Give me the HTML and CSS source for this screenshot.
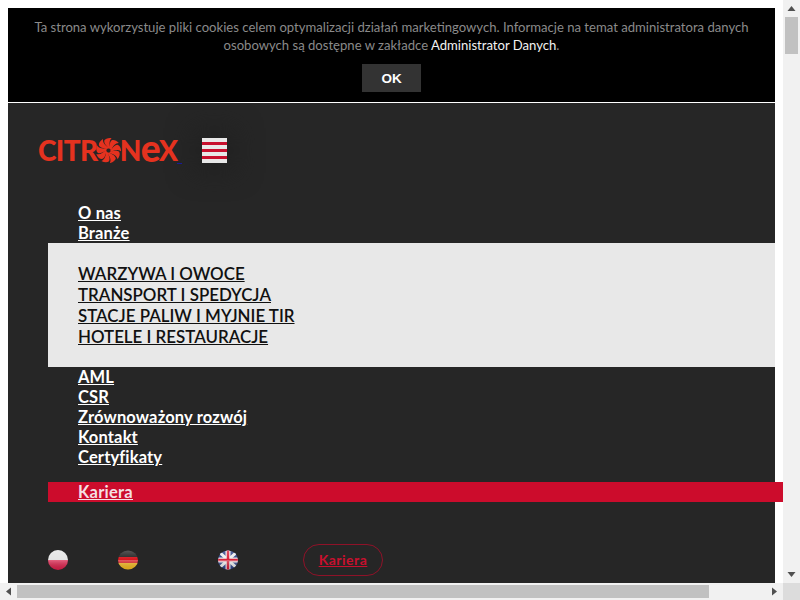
FILE: index.html
```html
<!DOCTYPE html>
<html lang="pl">
<head>
<meta charset="utf-8">
<title>Citronex</title>
<link rel="stylesheet" href="styles.css">
</head>
<body>
<div class="viewport">
<section class="cookie">
  <p class="cookie-text">Ta strona wykorzystuje pliki cookies celem optymalizacji działań marketingowych. Informacje na temat administratora danych osobowych są dostępne w zakładce <a href="#">Administrator Danych</a>.</p>
  <button class="cookie-ok">OK</button>
</section>
<main class="panel">
  <header class="top">
    <a class="logo" href="#"><span>CITR</span><svg class="swirl" viewBox="-12 -12 24 24" width="25" height="25"><g fill="#e5321f"><path id="b" d="M0-1.800C-1-4-4.500-6-4-9.500C-3-11.500 0-12.300 3-11.800C.5-9.500 .5-6 2-2Z"/><use href="#b" transform="rotate(40)"/><use href="#b" transform="rotate(80)"/><use href="#b" transform="rotate(120)"/><use href="#b" transform="rotate(160)"/><use href="#b" transform="rotate(200)"/><use href="#b" transform="rotate(240)"/><use href="#b" transform="rotate(280)"/><use href="#b" transform="rotate(320)"/></g></svg><span>N</span><span class="logo-e">e</span><span>X</span></a>
    <button class="burger" aria-label="Menu"><i></i><i></i><i></i></button>
  </header>
  <nav class="nav">
    <ul class="menu">
      <li><a href="#">O nas</a></li>
      <li><a href="#">Branże</a></li>
    </ul>
    <ul class="sub">
      <li><a href="#">WARZYWA I OWOCE</a></li>
      <li><a href="#">TRANSPORT I SPEDYCJA</a></li>
      <li><a href="#">STACJE PALIW I MYJNIE TIR</a></li>
      <li><a href="#">HOTELE I RESTAURACJE</a></li>
    </ul>
    <ul class="menu">
      <li><a href="#">AML</a></li>
      <li><a href="#">CSR</a></li>
      <li><a href="#">Zrównoważony rozwój</a></li>
      <li><a href="#">Kontakt</a></li>
      <li><a href="#">Certyfikaty</a></li>
    </ul>
    <div class="active"><a href="#">Kariera</a></div>
  </nav>
  <footer class="langs">
    <svg class="flag pl" viewBox="0 0 20 20"><defs><clipPath id="c"><circle cx="10" cy="10" r="10"/></clipPath><clipPath id="o"><ellipse cx="10" cy="10" rx="10" ry="9.500"/></clipPath><linearGradient id="g" x1="0" y1="0" x2="0" y2="1"><stop offset="0" stop-color="#fff" stop-opacity=".25"/><stop offset=".5" stop-color="#fff" stop-opacity="0"/><stop offset=".5" stop-color="#fff" stop-opacity=".3"/><stop offset="1" stop-color="#000" stop-opacity=".1"/></linearGradient></defs><g clip-path="url(#c)"><rect width="20" height="10" fill="#e4e4e4"/><rect y="10" width="20" height="10" fill="#dc1f4a"/><rect width="20" height="20" fill="url(#g)"/></g></svg>
    <svg class="flag de" viewBox="0 0 20 20"><g clip-path="url(#o)"><rect width="20" height="7" fill="#222"/><rect y="7" width="20" height="6" fill="#d8141c"/><rect y="13" width="20" height="7" fill="#f2b91e"/><rect width="20" height="20" fill="url(#g)"/></g></svg>
    <svg class="flag en" viewBox="0 0 20 20"><g clip-path="url(#o)"><rect width="20" height="20" fill="#2a3f85"/><path d="M0 1L20 19M20 1L0 19" stroke="#eee" stroke-width="3"/><path d="M10 0V20M0 10H20" stroke="#eee" stroke-width="5"/><path d="M10 0V20M0 10H20" stroke="#d81e36" stroke-width="2.500"/><rect width="20" height="20" fill="url(#g)"/></g></svg>
    <a class="career" href="#">Kariera</a>
  </footer>
</main>
</div>
<div class="vbar">
  <svg class="arrow" viewBox="0 0 17 17"><path d="M8.500 6L12.500 11H4.500Z"/></svg>
  <div class="vtrack"><div class="vthumb"></div></div>
  <svg class="arrow" viewBox="0 0 17 17"><path d="M8.500 11L12.500 6H4.500Z"/></svg>
</div>
<div class="hbar">
  <svg class="arrow" viewBox="0 0 17 17"><path d="M6 8.500L11 4.500V12.500Z"/></svg>
  <div class="htrack"><div class="hthumb"></div></div>
  <svg class="arrow" viewBox="0 0 17 17"><path d="M11 8.500L6 4.500V12.500Z"/></svg>
</div>
<div class="corner"></div>
</body>
</html>
```

FILE: styles.css
```css
html, body { height: 100%; overflow: hidden; }
body { margin: 0; display: grid; grid-template-columns: 783px 17px; grid-template-rows: 583px 17px; background: #fff; font-family: "Lato", "Open Sans", sans-serif; }
.viewport { padding: 8px 8px 0; overflow: hidden; }
.vbar, .hbar { display: flex; background: #f1f1f1; }
.vbar { flex-direction: column; }
.arrow { width: 17px; height: 17px; flex: none; fill: #505050; }
.vtrack { flex: 1; padding: 0 2px; }
.vthumb { height: 37px; background: #c1c1c1; }
.htrack { flex: 1; padding: 2px 0; }
.hthumb { width: 692px; height: 13px; background: #c1c1c1; }
.corner { background: #dcdcdc; }
.cookie { background: #000; height: 94px; border-bottom: 1px solid #fff; text-align: center; display: flex; flex-direction: column; align-items: center; }
.cookie-text { margin: 10px 20px 0; font-size: 13.100px; line-height: 18px; color: #8a8a8a; }
.cookie-text a { color: #f2f2f2; text-decoration: none; }
.cookie-ok { margin-top: 10px; width: 59px; height: 28px; border: 0; background: #333; color: #fff; font: bold 13.500px "Liberation Sans", sans-serif; }
.panel { background: #262626; padding-top: 35px; height: 480px; }
.top { display: flex; align-items: center; padding-left: 30px; height: 25px; }
.logo { display: flex; align-items: center; color: #e5321f; text-decoration: none; font: 900 28px/25px "Lato", sans-serif; letter-spacing: -.6px; width: 164px; position: relative; }
.logo::after { content: ""; position: absolute; left: 139px; top: 25px; width: 5px; height: 1px; background: #1a1a9a; }
.logo-e { font-size: 37px; line-height: 25px; margin: -6px -1px 0 0; }
.swirl { flex: none; margin: 0 -1px 0 -2px; }
.burger { width: 25px; height: 25px; padding: 4px 0; border: 0; background: #e8e8e8; display: flex; flex-direction: column; justify-content: space-between; box-shadow: 0 0 25px 10px #222; }
.burger i { display: block; height: 3px; background: #c8102e; }
.nav { margin-top: 40px; }
.menu, .sub { list-style: none; margin: 0; padding: 0; }
.menu { padding-left: 70px; font: 700 16.500px/20px "Lato", sans-serif; letter-spacing: .15px; }
.menu a { color: #fff; }
.sub { margin-left: 40px; padding: 20px 30px; background: #e8e8e8; font: 600 16.900px/21px "Lato", sans-serif; }
.sub a { color: #111; }
.active { margin: 15px -8px 0 40px; padding-left: 30px; background: #cc0c2c; font: 700 16.500px/20px "Lato", sans-serif; letter-spacing: .25px; }
.active a { color: #f5dfe3; }
.langs { display: flex; align-items: center; margin-top: 42px; padding-left: 40px; height: 32px; }
.flag { width: 20px; height: 20px; flex: none; }
.de { margin-left: 50px; }
.en { margin-left: 80px; }
.career { margin-left: 65px; width: 78px; height: 30px; border: 1px solid #8f1228; border-radius: 16px; color: #c8102e; font: 700 14px/30px "Lato", sans-serif; letter-spacing: .5px; text-align: center; }
```
